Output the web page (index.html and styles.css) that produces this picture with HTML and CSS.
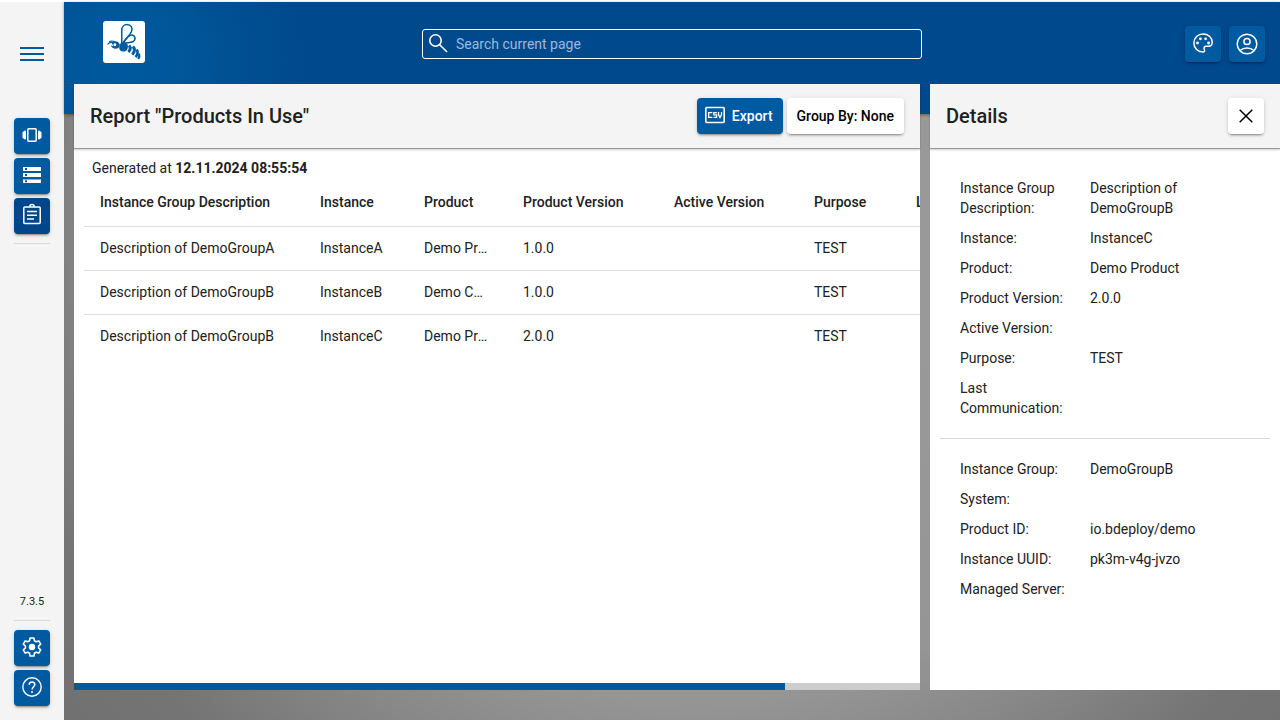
FILE: index.html
```html
<!DOCTYPE html>
<html lang="en">
<head>
<meta charset="utf-8">
<title>Products In Use</title>
<link rel="stylesheet" href="styles.css">
</head>
<body>
<div class="app">
  <nav class="sidebar" aria-label="Main menu">
    <button class="menu-toggle" aria-label="Toggle menu"><span class="bar"></span><span class="bar"></span><span class="bar"></span></button>
    <div class="nav-group">
      <button class="btn icon-btn primary" aria-label="Instance groups">
        <svg class="icon" viewBox="0 0 24 24"><rect x="7.8" y="5.8" width="8.4" height="12.4" rx="1" fill="none" stroke="currentColor" stroke-width="1.5"/><rect x="4" y="7.500" width="2" height="9" rx="1"/><rect x="2.500" y="8.500" width="2.500" height="7" rx="1"/><rect x="18" y="7.500" width="2" height="9" rx="1"/><rect x="19" y="8.500" width="2.500" height="7" rx="1"/></svg>
      </button>
      <button class="btn icon-btn primary" aria-label="Repositories">
        <svg class="icon" viewBox="0 0 24 24"><path fill-rule="evenodd" d="M3 4h18v4H3zM5 5v2h2V5zM3 10h18v4H3zM5 11v2h2v-2zM3 16.500h18v3.500H3zM5 17.300v2h2v-2z"/></svg>
      </button>
      <button class="btn icon-btn active" aria-label="Reports">
        <svg class="icon" viewBox="0 0 24 24"><g fill="none" stroke="currentColor" stroke-width="1.5"><rect x="3.8" y="4" width="16.4" height="16.6" rx="1"/><path d="M7 8.5h10M7 12.3h10M7 16h7"/><path d="M9.8 3.7a2.2 2.2 0 0 1 4.4 0"/></g></svg>
      </button>
    </div>
    <hr class="rule">
    <div class="version">7.3.5</div>
    <hr class="rule">
    <div class="nav-group bottom">
      <button class="btn icon-btn primary" aria-label="Settings">
        <svg class="icon" viewBox="0 0 24 24"><path fill="none" stroke="currentColor" stroke-width="1.6" stroke-linejoin="round" d="M10.1 3h3.8l.5 2.7 1.8 1.1 2.6-.9 1.9 3.3-2.1 1.8v2l2.1 1.8-1.9 3.3-2.6-.9-1.8 1.1-.5 2.7h-3.8l-.5-2.7-1.8-1.1-2.6.9-1.9-3.3L5.400 13v-2L3.300 9.200l1.900-3.300 2.600.9 1.800-1.100z"/><circle cx="12" cy="12" r="3.2"/></svg>
      </button>
      <button class="btn icon-btn primary" aria-label="Help">
        <svg class="icon" viewBox="0 0 24 24"><circle cx="12" cy="12" r="9.200" fill="none" stroke="currentColor" stroke-width="1.400"/><path fill="none" stroke="currentColor" stroke-width="1.500" d="M9.200 9.800c0-3.700 5.600-3.600 5.600-.2 0 2-2.700 2.400-2.700 4.900"/><circle cx="12" cy="17" r="1"/></svg>
      </button>
    </div>
  </nav>

  <div class="main">
    <header class="topbar">
      <a class="logo" href="#" aria-label="Home">
        <svg viewBox="0 0 42 42" width="42" height="42"><g fill="none" stroke="#005a9f" stroke-width="1.500"><path d="M18.800 23V9c0-3.500 2.500-5.500 5.200-5.500 4 0 6 3.500 4.500 7-1.500 4-5.500 6.500-8.500 11.500"/><path d="M20.500 21.500c2.500-3.500 5-7.500 8-7.500 3.500 0 4.800 4.500 1.800 6.500-2.500 1.500-6 1-9 1.800"/><path d="M4.500 23.500c1.500-2 3-2.500 5-2M6 20.500c2-.8 4-.8 6 .5" stroke-width="1.100"/></g><path fill="#005a9f" fill-rule="evenodd" d="M8.500 21.200c3-1.700 6.500-1 7.800 1.300 1 2.500-.5 5-3.300 5.200-2.600.1-4.500-1.200-5.200-3.200l2.500.8zM11.800 22.200a1.500 1.500 0 1 0 .1 0z"/><path fill="#005a9f" d="M16.500 23.500c2-2.500 6-3 7.800-.5 1.500 3 .3 6.800-2.800 7.500-3.200.6-5.500-1.500-5.300-4z"/><g fill="none" stroke="#005a9f" stroke-width="3"><path d="M26 24.500c2 2 1.500 4.500-.7 6.500"/><path d="M30 25.500c2.200 2.500 1.700 5.500-.8 8" /><path d="M33.700 28.500c1.500 2.500.9 5.200-1.200 7.500" stroke-width="2.600"/><path d="M36 32.500c.7 2 .3 3.800-.8 5.500" stroke-width="2.200"/></g></svg>
      </a>
      <label class="search">
        <svg class="icon" viewBox="0 0 24 24"><g fill="none" stroke="currentColor" stroke-width="1.600"><circle cx="8.500" cy="8.500" r="5.700"/><path d="M12.700 12.700l7.300 7.300"/></g></svg>
        <input type="search" placeholder="Search current page" aria-label="Search current page">
      </label>
      <div class="top-actions">
        <button class="btn icon-btn primary" aria-label="Theme">
          <svg class="icon" viewBox="0 0 24 24"><path fill="none" stroke="currentColor" stroke-width="1.500" d="M12 2.900a9.100 9.100 0 0 0 0 18.200c1.500 0 2-1.400 1.300-2.600-.9-1.900.1-3.300 2-3.300h2.200c2.300 0 3.700-1.600 3.700-4C21.200 6.300 17 2.900 12 2.900z"/><circle cx="6.500" cy="12" r="1.400"/><circle cx="9.400" cy="7.800" r="1.400"/><circle cx="14.600" cy="7.800" r="1.400"/><circle cx="17.600" cy="12" r="1.400"/></svg>
        </button>
        <button class="btn icon-btn primary" aria-label="User">
          <svg class="icon" viewBox="0 0 24 24"><g fill="none" stroke="currentColor" stroke-width="1.500"><circle cx="12" cy="13" r="9.800"/><circle cx="12" cy="10.500" r="3.100"/><path d="M5 19.500c4-3.400 10-3.400 14 0"/></g></svg>
        </button>
      </div>
    </header>

    <div class="panels">
      <main class="panel report">
        <div class="panel-head">
          <h1>Report "Products In Use"</h1>
          <button class="btn primary text-btn">
            <svg class="icon csv" viewBox="0 0 24 24"><g fill="none" stroke="currentColor"><rect x="2.800" y="4.500" width="18.400" height="15" rx="1" stroke-width="1.600"/><path stroke-width="1.300" d="M8.700 10.200V9.700H5.700v4.600h3v-.6M13.800 9.700h-2.900v2.100h2.700v2.500h-3M15.500 9v2.500l1.500 3 1.500-3V9"/></g></svg>
            Export</button>
          <button class="btn plain text-btn">Group By: None</button>
        </div>
        <div class="report-body">
          <p class="generated">Generated at <strong>12.11.2024 08:55:54</strong></p>
          <table class="data">
            <colgroup><col class="c-desc"><col class="c-inst"><col class="c-prod"><col class="c-ver"><col class="c-act"><col class="c-purp"><col class="c-last"></colgroup>
            <thead><tr><th>Instance Group Description</th><th>Instance</th><th>Product</th><th>Product Version</th><th>Active Version</th><th>Purpose</th><th>Last Communication</th></tr></thead>
            <tbody>
              <tr><td>Description of DemoGroupA</td><td>InstanceA</td><td>Demo Product</td><td>1.0.0</td><td></td><td>TEST</td><td></td></tr>
              <tr><td>Description of DemoGroupB</td><td>InstanceB</td><td>Demo Chat</td><td>1.0.0</td><td></td><td>TEST</td><td></td></tr>
              <tr><td>Description of DemoGroupB</td><td>InstanceC</td><td>Demo Product</td><td>2.0.0</td><td></td><td>TEST</td><td></td></tr>
            </tbody>
          </table>
        </div>
        <div class="scroll-track"><div class="scroll-thumb"></div></div>
      </main>

      <aside class="panel details">
        <div class="panel-head">
          <h2>Details</h2>
          <button class="btn icon-btn plain" aria-label="Close">
            <svg class="icon" viewBox="0 0 24 24"><path fill="none" stroke="currentColor" stroke-width="1.500" d="M5.700 5.700l12.600 12.600M18.300 5.700L5.700 18.300"/></svg>
          </button>
        </div>
        <div class="details-body">
          <dl>
            <dt>Instance Group Description:</dt><dd>Description of DemoGroupB</dd>
            <dt>Instance:</dt><dd>InstanceC</dd>
            <dt>Product:</dt><dd>Demo Product</dd>
            <dt>Product Version:</dt><dd>2.0.0</dd>
            <dt>Active Version:</dt><dd></dd>
            <dt>Purpose:</dt><dd>TEST</dd>
            <dt>Last Communication:</dt><dd></dd>
          </dl>
          <hr class="rule">
          <dl>
            <dt>Instance Group:</dt><dd>DemoGroupB</dd>
            <dt>System:</dt><dd></dd>
            <dt>Product ID:</dt><dd>io.bdeploy/demo</dd>
            <dt>Instance UUID:</dt><dd>pk3m-v4g-jvzo</dd>
            <dt>Managed Server:</dt><dd></dd>
          </dl>
        </div>
      </aside>
    </div>
  </div>
</div>
</body>
</html>
```
FILE: styles.css
```css
* { box-sizing: border-box; }
body { margin: 0; font: 14px/20px Roboto, sans-serif; color: #212121; background: #fff; }
h1, h2, p, dl, dd { margin: 0; }
.app { display: flex; min-height: 100vh; padding-top: 2px; }
.rule { width: 100%; height: 1px; margin: 0; border: 0; background: #d8d8d8; }

.sidebar { width: 64px; flex: none; display: flex; flex-direction: column; padding: 40px 14px 14px; background: #f4f4f4; }
.menu-toggle { display: flex; flex-direction: column; gap: 4px; margin: 0 6px 52px; padding: 5px 0; border: 0; background: none; }
.bar { width: 24px; height: 2px; background: #005a9f; }
.nav-group { display: flex; flex-direction: column; gap: 4px; margin-bottom: 9px; }
.nav-group.bottom { margin: 9px 0 0; }
.version { margin: auto 0 8px; text-align: center; font-size: 11px; }

.btn { display: flex; align-items: center; justify-content: center; height: 36px; padding: 0; border: 0; border-radius: 4px; font: 500 14px/20px Roboto, sans-serif; box-shadow: 0 3px 1px -2px rgba(0,0,0,.2), 0 2px 2px rgba(0,0,0,.14), 0 1px 5px rgba(0,0,0,.12); }
.icon-btn { width: 36px; flex: none; }
.primary { background: #005a9f; color: #fff; }
.active { background: #00468a; color: #fff; }
.plain { background: #fff; color: #000; }
.text-btn { padding: 0 10px; flex: none; }
.icon { width: 24px; height: 24px; flex: none; fill: currentColor; }
.nav-group .icon, .top-actions .icon { margin-bottom: 2px; }
.csv { margin: 0 5px 2px -4px; }

.main { flex: 1; min-width: 0; display: flex; flex-direction: column; background: radial-gradient(circle at 52% 28%, #9c9c9c 0, #959595 500px, #747474 720px, #707070 850px); }
.topbar { display: flex; align-items: flex-start; justify-content: space-between; height: 112px; flex: none; padding: 19px 15px 0 39px; background: radial-gradient(circle at 60px 60px, #005a9f 0, #005699 60px, #00498c 180px); box-shadow: 0 1px 3px rgba(0,0,0,.4); }
.logo { height: 42px; border-radius: 3px; background: #fff; }
.search { display: flex; align-items: center; width: 500px; height: 30px; margin: 8px 0 0 14px; padding: 0 4px; gap: 5px; border: 1px solid #fff; border-radius: 3px; color: #fff; }
.search input { flex: 1; min-width: 0; padding: 0; border: 0; outline: 0; background: none; color: #fff; font: 14px/20px Roboto, sans-serif; }
.search input::placeholder { color: #9dbbd6; }
.top-actions { display: flex; gap: 8px; margin-top: 5px; }

.panels { flex: 1; display: flex; gap: 10px; margin: -30px 0 30px; padding-left: 10px; z-index: 1; }
.panel { display: flex; flex-direction: column; background: #fff; }
.report { flex: 1; min-width: 0; }
.details { width: 350px; flex: none; }
.panel-head { display: flex; align-items: center; gap: 4px; height: 65px; flex: none; padding: 0 16px; background: #f4f4f4; border-bottom: 1px solid #999; box-shadow: 0 1px 2px rgba(0,0,0,.2); }
.panel-head h1, .panel-head h2 { flex: 1; font-size: 20px; line-height: 32px; font-weight: 500; }

.report-body { flex: 1; padding: 9px 10px 0; overflow: hidden; }
.scroll-track { height: 7px; flex: none; background: #ccc; }
.scroll-thumb { width: 84%; height: 100%; background: #005a9f; }
.generated { padding-left: 8px; }
.data { width: 987px; table-layout: fixed; border-collapse: collapse; }
.data th, .data td { height: 44px; padding: 0 8px; border-bottom: 1px solid #dcdcdc; text-align: left; white-space: nowrap; overflow: hidden; text-overflow: ellipsis; }
.data th { height: 48px; font-weight: 500; }
.data tbody tr:last-child td { border-bottom: 0; }
.data th:first-child, .data td:first-child { padding-left: 16px; }
.c-desc { width: 228px; }
.c-inst { width: 104px; }
.c-prod { width: 99px; }
.c-ver { width: 151px; }
.c-act { width: 140px; }
.c-purp { width: 102px; }
.data td:nth-child(3) { padding-right: 26px; }

.details-body { padding: 9px 10px; }
dl { display: grid; grid-template-columns: 120px 1fr; gap: 10px; padding: 20px; }
dt { min-height: 20px; }
```
